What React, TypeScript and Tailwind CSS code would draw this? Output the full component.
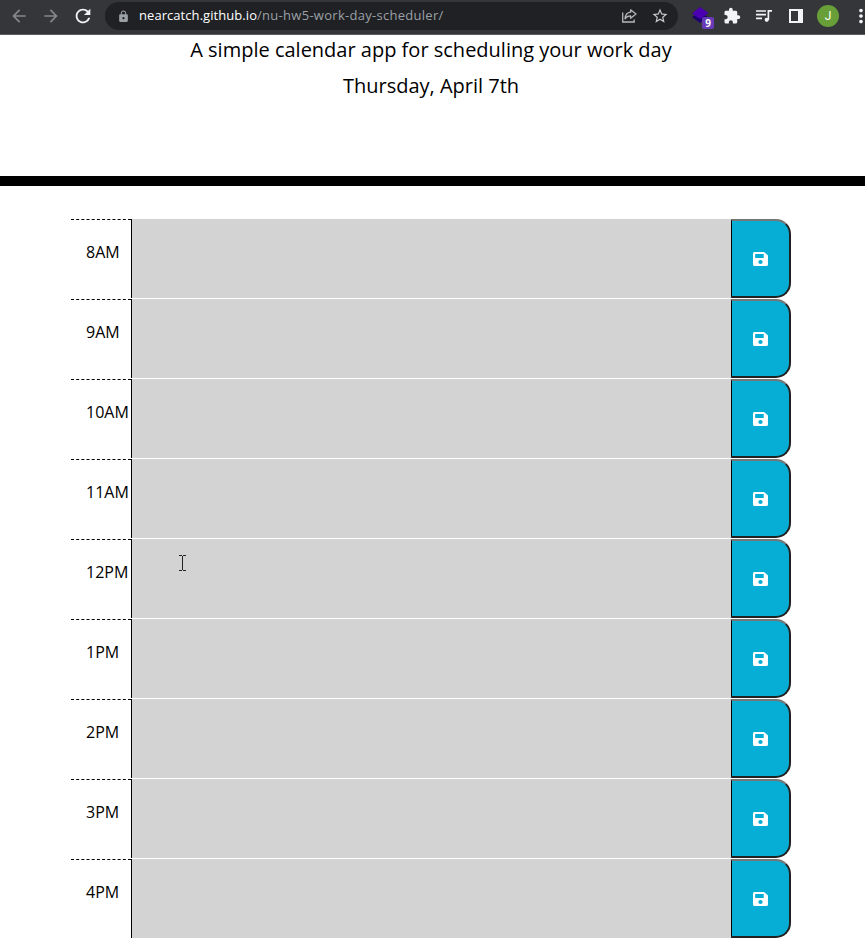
import { FaSave } from "react-icons/fa";
import {
  MdArrowBack,
  MdArrowForward,
  MdExtension,
  MdLock,
  MdMoreVert,
  MdRefresh,
  MdStarBorder,
} from "react-icons/md";

const hours = ["8AM", "9AM", "10AM", "11AM", "12PM", "1PM", "2PM", "3PM", "4PM"];

function ShareIcon() {
  return (
    <svg width="16" height="16" viewBox="0 0 16 16" fill="none" stroke="#b4b7bb" strokeWidth="1.3" className="shrink-0">
      <path d="M1.7 4.500v9.500h11.500v-2.500" />
      <path d="M9.6 1.800 15 6l-5.400 4.200V7.800C7 7.800 5.200 8.800 4 10.800 4.300 7.200 6 4.600 9.600 4.200z" strokeLinejoin="round" />
    </svg>
  );
}

function LayersIcon() {
  return (
    <div className="relative ml-[14px] h-[26px] w-[22px] shrink-0">
      <svg width="22" height="26" viewBox="0 0 22 26">
        <path d="M0 14 8 9l8 5-8 6z" fill="#1c0070" />
        <path d="M0 10.500 8 4l8.500 6L8 16z" fill="#4a00b0" />
      </svg>
      <span className="absolute top-[14px] left-[10px] flex h-3 w-3 items-center justify-center rounded-[2px] bg-[#673ab7] font-['Open_Sans',sans-serif] text-[10px] leading-none font-bold text-white">
        9
      </span>
    </div>
  );
}

function Toolbar() {
  return (
    <header className="flex h-[35px] items-center overflow-hidden border-b border-[#5b5c60] bg-[#35363a] pb-[2px]">
      <MdArrowBack className="ml-[9px] size-[20px] shrink-0 text-[#86888a]" />
      <MdArrowForward className="ml-3 size-[20px] shrink-0 text-[#86888a]" />
      <MdRefresh className="ml-[11px] size-[22px] shrink-0 text-[#f1f3f4]" />
      <div className="ml-[11px] flex h-7 w-[573px] shrink-0 items-center rounded-full bg-[#202124]">
        <MdLock className="ml-[12px] size-[13px] shrink-0 text-[#9aa0a6]" />
        <span className="ml-[9px] font-['Open_Sans','Noto_Sans',sans-serif] text-[13px] font-normal whitespace-nowrap text-[#9aa0a6]">
          <span className="tracking-[0.06px] text-white">nearcatch.github.io</span>
          <span className="tracking-[0.28px]">/nu-hw5-work-day-scheduler/</span>
        </span>
        <div className="mr-[9px] ml-auto flex items-center gap-[14px]">
          <ShareIcon />
          <MdStarBorder className="size-[18px] text-[#c6c9cc]" />
        </div>
      </div>
      <LayersIcon />
      <MdExtension className="ml-[9px] size-[18px] shrink-0 text-[#f1f3f4]" />
      <svg width="16" height="14" viewBox="0 0 16 14" fill="none" stroke="#f1f3f4" strokeWidth="1.7" className="ml-[15px] shrink-0">
        <path d="M0 2h10M0 5.700h10M0 9.400h6M16 1.800h-3.600v9" />
        <circle cx="10.700" cy="10.800" r="1.700" fill="#f1f3f4" stroke="none" />
        <circle cx="10.700" cy="10.800" r="1.200" />
      </svg>
      <svg width="14" height="14" viewBox="0 0 14 14" className="ml-[17px] shrink-0">
        <path d="M0 0h14v14H0zM2 2v10h7V2z" fill="#f1f3f4" fillRule="evenodd" />
      </svg>
      <span className="ml-[14px] flex size-[22px] shrink-0 items-center justify-center rounded-full bg-[#689f38] font-[Roboto,sans-serif] text-[12px] font-normal text-white">
        J
      </span>
      <MdMoreVert className="ml-[11px] size-[22px] shrink-0 text-[#f1f3f4]" />
    </header>
  );
}

function TimeBlock({ hour }: { hour: string }) {
  return (
    <div className="flex h-[79px]">
      <div className="w-[60px] border-t border-dashed border-black pt-5 pl-[15px] text-[16px] leading-6 whitespace-nowrap">
        {hour}
      </div>
      <div className="w-[600px] border-l border-black bg-[#d3d3d3]" />
      <button className="flex w-[60px] items-center justify-center rounded-r-[15px] border-2 border-l border-t-[#767676] border-r-[#212121] border-b-[#212121] border-l-black bg-[#06aed5] text-white">
        <FaSave className="mr-px h-4 w-[15px]" preserveAspectRatio="none" />
      </button>
    </div>
  );
}

export default function App() {
  return (
    <div className="relative h-[944px] w-[865px] overflow-hidden bg-white font-['Open_Sans',sans-serif] font-normal text-black">
      <Toolbar />
      <div className="h-[151px] border-b-[10px] border-black pr-[3px] text-center text-[20px]">
        <p className="leading-[30px]">A simple calendar app for scheduling your work day</p>
        <p className="mt-[6px] leading-[30px]">Thursday, April 7th</p>
      </div>
      <main className="mt-[33px] ml-[71px] flex w-[720px] flex-col gap-px">
        {hours.map((hour) => (
          <TimeBlock key={hour} hour={hour} />
        ))}
      </main>
      <svg width="7" height="17" viewBox="0 0 7 17" className="absolute top-[555px] left-[179px]" fill="#222">
        <path d="M0 0h3v1H0zM4 0h3v1H4zM3 1h1v14H3zM0 15h3v1H0zM4 15h3v1H4z" />
      </svg>
    </div>
  );
}
